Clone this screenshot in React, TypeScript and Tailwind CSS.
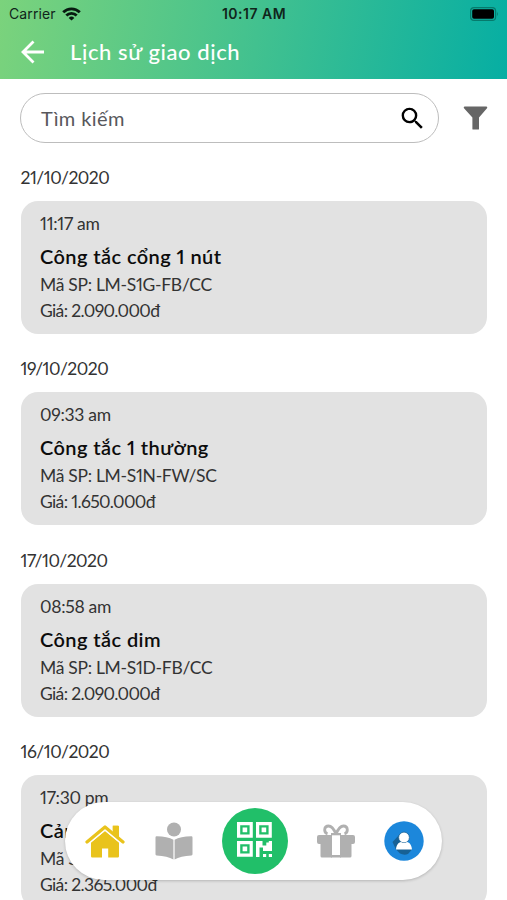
import { MdSearch } from "react-icons/md";

interface Transaction {
	date: string;
	time: string;
	name: string;
	code: string;
	price: string;
}

const transactions: Transaction[] = [
	{
		date: "21/10/2020",
		time: "11:17 am",
		name: "Công tắc cổng 1 nút",
		code: "LM-S1G-FB/CC",
		price: "2.090.000đ",
	},
	{
		date: "19/10/2020",
		time: "09:33 am",
		name: "Công tắc 1 thường",
		code: "LM-S1N-FW/SC",
		price: "1.650.000đ",
	},
	{
		date: "17/10/2020",
		time: "08:58 am",
		name: "Công tắc dim",
		code: "LM-S1D-FB/CC",
		price: "2.090.000đ",
	},
	{
		date: "16/10/2020",
		time: "17:30 pm",
		name: "Cảm biến",
		code: "LM-CB",
		price: "2.365.000đ",
	},
];

const StatusBar = () => (
	<div className="grid h-[27px] grid-cols-3 items-center pl-[9px] pr-[8px] font-['Inter','Liberation_Sans',sans-serif] text-[14px] text-[#10251b]">
		<div className="flex items-center gap-[6px]">
			<span className="tracking-[0.1px]">Carrier</span>
			<svg width="19" height="14" viewBox="0 0 19 14" fill="none" stroke="#071a10" strokeWidth="2.8">
				<path d="M1.2 5.2a11.8 11.8 0 0 1 16.6 0" />
				<path d="M4.3 8.6a7.4 7.4 0 0 1 10.4 0" />
				<path d="M9.5 13.5 6.7 10.9a4 4 0 0 1 5.6 0z" fill="#071a10" stroke="none" />
			</svg>
		</div>
		<span className="text-center font-semibold tracking-[0.5px]">10:17 AM</span>
		<svg className="justify-self-end" width="29" height="14" viewBox="0 0 29 14">
			<rect x=".6" y=".6" width="25" height="12.8" rx="3.5" fill="none" stroke="#067a6c" strokeWidth="1.2" />
			<rect x="2.2" y="2.2" width="21.8" height="9.6" rx="1.8" fill="#000" />
			<path d="M27 4.8q1.8 2.2 0 4.4z" fill="#067a6c" />
		</svg>
	</div>
);

const Header = () => (
	<header className="h-[79px] shrink-0 bg-[linear-gradient(100deg,#7bd37c_0%,#45c28e_48%,#06aea3_100%)]">
		<StatusBar />
		<div className="flex h-[50px] items-center gap-[25px] pl-[21px] text-white">
			<svg width="24" height="24" viewBox="0 0 24 24" fill="none" stroke="currentColor" strokeWidth="2.8">
				<path d="M23 12H2M12.5 1.5 2 12l10.5 10.5" />
			</svg>
			<h1 className="text-[22px] font-medium leading-[28px] tracking-[0.6px]">Lịch sử giao dịch</h1>
		</div>
	</header>
);

const SearchRow = () => (
	<div className="flex shrink-0 items-center pl-[20px] pt-[14px]">
		<div className="flex h-[50px] w-[419px] items-center justify-between rounded-full border-[1.5px] border-[#bdbdbd] pl-[20px] pr-[11px]">
			<span className="text-[20px] tracking-[0.4px] text-[#58585c]">Tìm kiếm</span>
			<MdSearch size={29} color="#000" />
		</div>
		<svg className="ml-[24px]" width="25" height="24" viewBox="0 0 25 24" fill="#666">
			<path d="M1.5.5h22q1.4.6.5 1.8L16 11.500V23q0 .6-.8.6h-5q-.8 0-.8-.6V11.500L1 2.300Q.1 1.100 1.500.5z" />
		</svg>
	</div>
);

const TransactionGroup = ({ date, time, name, code, price }: Transaction) => (
	<section className="h-[191.4px] shrink-0 px-[20.5px] text-[17.5px] leading-[26px] text-[#333] proportional-nums">
		<p className="h-[58px] pt-[22px] tracking-[-0.5px]">{date}</p>
		<div className="h-[133px] rounded-[17px] bg-[#e2e2e2] px-[19.5px] pt-[10px]">
			<p className="tracking-[-0.3px]">{time}</p>
			<p className="mb-[1px] mt-[4px] text-[20px] font-semibold leading-[30px] tracking-[0.42px] text-[#0c0c0c]">{name}</p>
			<p className="tracking-[-0.3px]">Mã SP: {code}</p>
			<p className="tracking-[-0.65px]">Giá: {price}</p>
		</div>
	</section>
);

const HomeIcon = () => (
	<svg width="40" height="33" viewBox="0 0 40 33" fill="#e9c31c">
		<path d="M20 6 34 17.5v13.800q0 1.200-1.200 1.200h-9.600v-9h-6.200v9H7.200q-1.200 0-1.200-1.200V17.500z" />
		<path d="M27.800.8h5.200q1 0 1 1v11l-6.200-5.200z" />
		<path d="M1.800 17.800 20 2.600l18.200 15.200" fill="none" stroke="#fff" strokeWidth="5" />
		<path d="M27.800.8h5.200q1 0 1 1v11l-6.200-5.200z" />
		<path d="M2 17 20 2l18 15" fill="none" stroke="#e9c31c" strokeWidth="3.2" strokeLinecap="round" strokeLinejoin="round" />
	</svg>
);

const ReaderIcon = () => (
	<svg className="ml-[1px]" width="38" height="38" viewBox="0 0 38 38" fill="#b0b0b0">
		<circle cx="19" cy="7.500" r="7" />
		<path d="M.5 15.500q0-1.300 1.300-1.200Q12.500 14.500 18.400 17.800v19.600Q12.500 33.800 1.600 33.400.5 33.300.5 32.200z" />
		<path d="M37.500 15.500q0-1.300-1.300-1.200Q25.500 14.500 19.600 17.800v19.600q5.900-3.600 16.800-4 1.100-.1 1.100-1.200z" />
	</svg>
);

const QrIcon = () => (
	<svg width="35" height="35" viewBox="0 0 35 35" fill="none" stroke="#fff" strokeWidth="3.2">
		<path d="M1.600 1.600h12.600v12.600H1.600zM20.600 1.600h12.600v12.600H20.600zM1.600 20.600h12.600v12.600H1.600z" />
		<path d="M5.600 5.600h4.600v4.600H5.600zM24.600 5.600h4.600v4.600h-4.600zM5.600 24.600h4.600v4.600H5.600z" fill="#fff" stroke="none" />
		<path d="M19 19h6.500v4.500h3.800V20.500h2.500V19H35v10h-9v-3.500h-3.500V35H19zM26 32h3.200v3H26zM31.800 32H35v3h-3.200z" fill="#fff" stroke="none" />
	</svg>
);

const GiftIcon = () => (
	<svg width="38" height="34" viewBox="0 0 38 34" fill="#b0b0b0">
		<path d="M2 11h13v22.500H5q-1.500 0-1.500-1.500V20H2q-2 0-2-2v-5q0-2 2-2zM36 11H23v22.500h10q1.500 0 1.500-1.500V20H36q2 0 2-2v-5q0-2-2-2z" />
		<path d="M14 9h10v2.300H14z" />
		<path d="M14 31h10v2.500H14z" />
		<path d="M19 10.200c-1.800-4.500-4.300-8.200-7.500-8.200-4.600 0-5.200 6.500-1 7.800M19 10.200C20.800 5.700 23.300 2 26.500 2c4.600 0 5.200 6.500 1 7.800" fill="none" stroke="#b0b0b0" strokeWidth="2.8" />
	</svg>
);

const ProfileIcon = () => (
	<svg width="40" height="40" viewBox="0 0 40 40">
		<circle cx="20" cy="20" r="19.7" fill="#1c87db" />
		<path d="M16 13 8.500 21l3.500 7.500 4 4q4 2 8 .5l4-4.500z" fill="#176196" />
		<circle cx="20" cy="16.500" r="5.400" fill="#fff" stroke="#176196" strokeWidth=".8" />
		<path d="M12 28.500c.3-4.700 2.500-7 5-7.500q3 2 6 0c2.500.5 4.700 2.800 5 7.500z" fill="#fff" />
	</svg>
);

const BottomNav = () => (
	<nav className="absolute left-[65px] top-[802px] flex h-[78px] w-[377px] items-center justify-between rounded-full bg-white pl-[20px] pr-[18.5px] shadow-[0_1px_3px_rgba(0,0,0,0.2)]">
		<HomeIcon />
		<ReaderIcon />
		<div className="flex h-[66px] w-[66px] items-center justify-center rounded-full bg-[#21bf69] pb-[3px]">
			<QrIcon />
		</div>
		<GiftIcon />
		<ProfileIcon />
	</nav>
);

const App = () => {
	return (
		<div className="relative flex h-[900px] w-[507px] flex-col overflow-hidden bg-white font-['Lato','Noto_Sans',sans-serif]">
			<Header />
			<SearchRow />
			{/* transactions grouped by day */}
			<main className="flex flex-col">
				{transactions.map(item => (
					<TransactionGroup key={item.date} {...item} />
				))}
			</main>
			<BottomNav />
		</div>
	);
};

export default App;
